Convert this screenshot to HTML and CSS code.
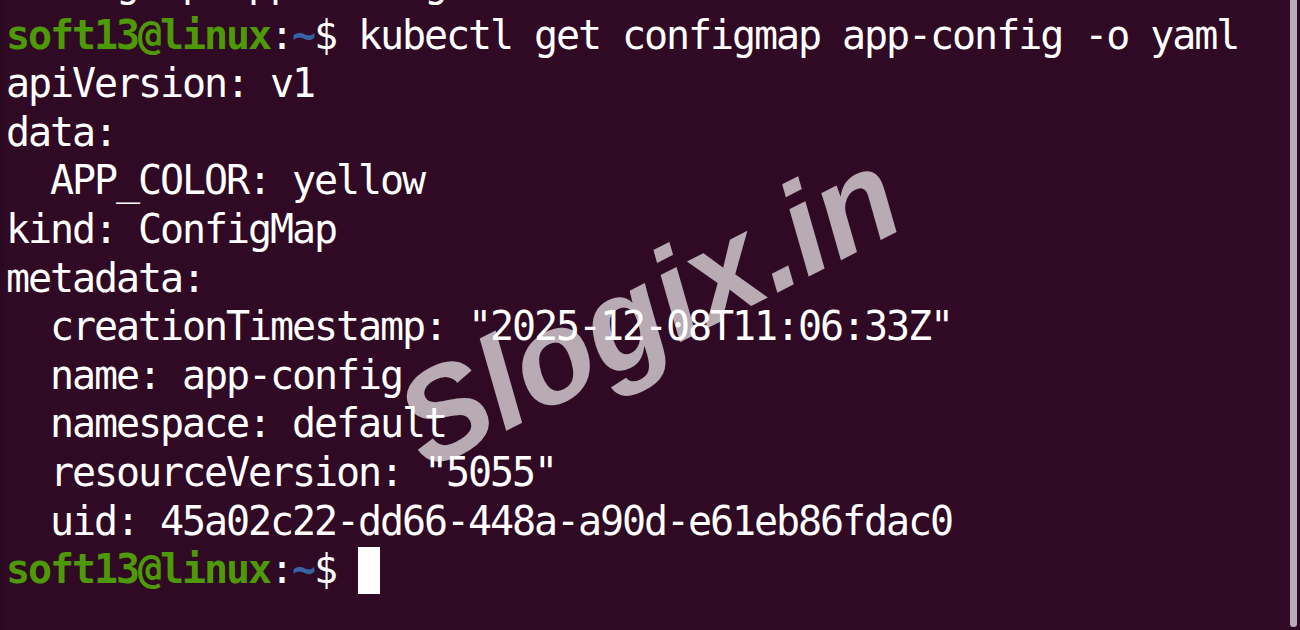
FILE: index.html
```html
<!DOCTYPE html>
<html lang="en">
<head>
  <meta charset="UTF-8" />
  <title>Terminal</title>
  <link rel="stylesheet" href="styles.css">
</head>
<body>
  <div class="window">
    <div class="terminal">
      <div class="screen">
        <div class="prev"><div class="line">configmap/app-config created</div></div>
        <div class="line"><b class="user">soft13@linux</b>:<b class="path">~</b>$ kubectl get configmap app-config -o yaml</div>
        <div class="line">apiVersion: v1</div>
        <div class="line">data:</div>
        <div class="line">  APP_COLOR: yellow</div>
        <div class="line">kind: ConfigMap</div>
        <div class="line">metadata:</div>
        <div class="line">  creationTimestamp: "2025-12-08T11:06:33Z"</div>
        <div class="line">  name: app-config</div>
        <div class="line">  namespace: default</div>
        <div class="line">  resourceVersion: "5055"</div>
        <div class="line">  uid: 45a02c22-dd66-448a-a90d-e61eb86fdac0</div>
        <div class="line"><b class="user">soft13@linux</b>:<b class="path">~</b>$ <span class="cursor"></span></div>
      </div>
      <div class="watermark">Slogix.in</div>
    </div>
    <div class="scrollbar"><div class="thumb"></div></div>
  </div>
</body>
</html>
```

FILE: styles.css
```css
* {
  box-sizing: border-box;
  margin: 0;
  padding: 0;
}

body {
  background-color: #300a24;
  width: 1300px;
  height: 630px;
  overflow: hidden;
}

.window {
  display: flex;
  height: 630px;
  border-left: 4px solid #2b0920;
}

/* --- zona de texto --- */
.terminal {
  position: relative;
  flex: 1;
  overflow: hidden;
  padding-left: 2px;
}

.screen {
  font-family: "DejaVu Sans Mono", monospace;
  font-size: 40px;
  letter-spacing: -2.08px;
  line-height: 48.6px;
  color: #ffffff;
}

.line {
  height: 48.6px;
  white-space: pre;
}

/* linea anterior, casi fuera de la ventana */
.prev {
  height: 10.6px;
  overflow: hidden;
}
.prev .line {
  margin-top: -42px;
}

.user {
  color: #4e9a06;
  font-weight: bold;
}

.path {
  color: #3465a4;
  font-weight: bold;
}

.cursor {
  display: inline-block;
  width: 22px;
  height: 47px;
  vertical-align: -11px;
  background-color: #ffffff;
}

/* --- marca de agua --- */
.watermark {
  position: absolute;
  left: 644px;
  top: 308px;
  transform: translate(-50%, -50%) rotate(-27deg);
  font-family: "Liberation Sans", sans-serif;
  font-style: italic;
  font-weight: bold;
  font-size: 130px;
  color: rgba(255, 255, 255, 0.66);
  white-space: nowrap;
}

/* --- barra de scroll --- */
.scrollbar {
  width: 13px;
  padding-left: 3px;
  padding-right: 3px;
}

.thumb {
  height: 627px;
  background-color: #b7abb7;
  border-radius: 0 0 3px 3px;
}
```
